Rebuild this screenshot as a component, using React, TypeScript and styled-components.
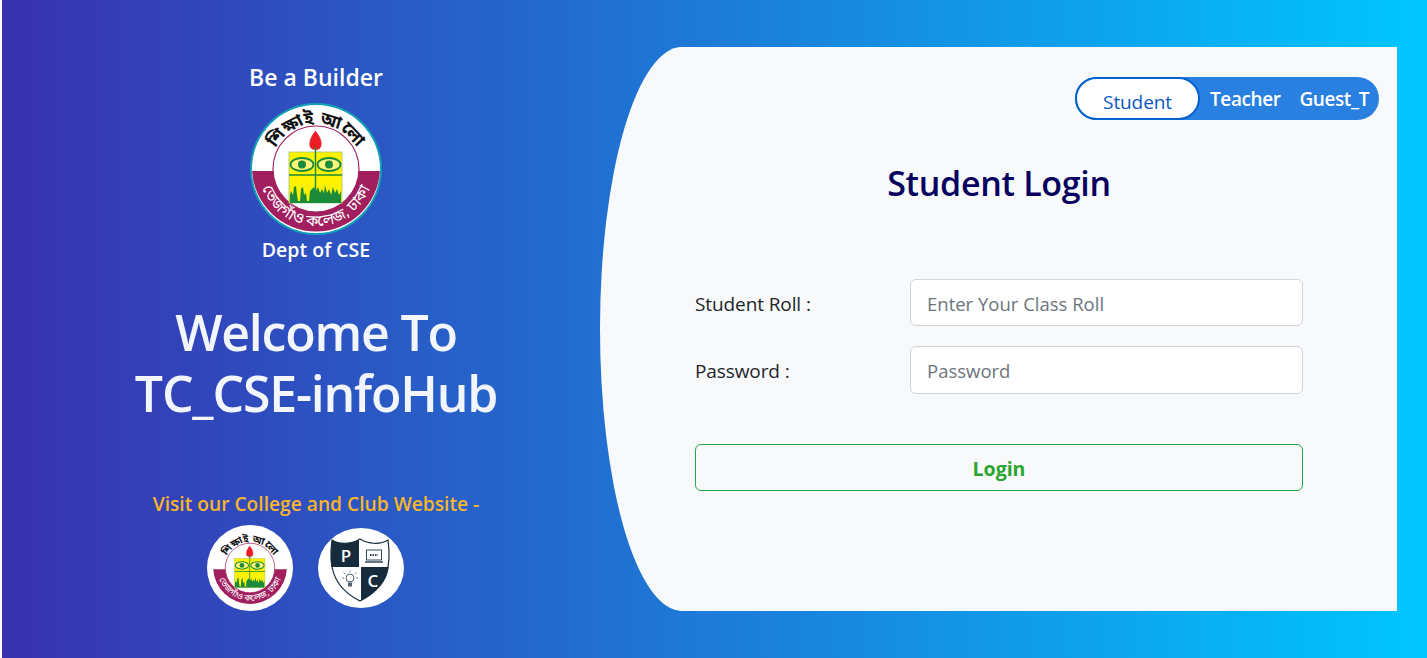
import React from 'react';
import styled, { createGlobalStyle } from 'styled-components';

const GlobalStyle = createGlobalStyle`
  html, body {
    margin: 0;
    padding: 0;
    background: #fff;
    font-family: "Open Sans", "Noto Sans", "Liberation Sans", sans-serif;
  }
`;

const Page = styled.div`
  display: flex;
  width: 1425px;
  height: 658px;
  margin-left: 2px;
  background: linear-gradient(90deg, #3931af 0%, #00c6ff 100%);
  box-sizing: border-box;
  padding: 47px 30px 47px 0;
`;

const Intro = styled.section`
  width: 598px;
  padding-left: 30px;
  margin-top: -47px;
  box-sizing: border-box;
  display: flex;
  flex-direction: column;
  align-items: center;
  color: #fff;
`;

const Motto = styled.div`
  margin-top: 62px;
  margin-bottom: 11px;
  height: 30px;
  font-size: 23px;
  line-height: 30px;
  font-weight: 600;
`;

const Dept = styled.div`
  font-size: 19.5px;
  line-height: 26px;
  font-weight: 600;
  margin-top: 2px;
`;

const Welcome = styled.h1`
  margin: 39px 0 0;
  font-size: 50px;
  line-height: 61px;
  font-weight: 600;
  text-align: center;
  letter-spacing: -1.2px;
  color: #f4f6ff;
`;

const Visit = styled.div`
  margin-top: 67px;
  font-size: 19.2px;
  line-height: 26px;
  font-weight: 600;
  color: #f9b52b;
`;

const LinkRow = styled.div`
  display: flex;
  gap: 25px;
  margin-top: 8px;
  margin-right: 21px;
  align-items: center;
`;

const Badge = styled.a<{ $height: number }>`
  width: 86px;
  height: ${(p) => p.$height}px;
  border-radius: 50%;
  background: #fff;
  display: flex;
  align-items: center;
  justify-content: center;
  overflow: hidden;
`;

const Panel = styled.main`
  flex: 1;
  background: #f8f9fa;
  border-radius: 82px 0 0 82px / 50% 0 0 50%;
  display: flex;
  flex-direction: column;
  padding: 30px 18px 0 95px;
  box-sizing: border-box;
`;

const Tabs = styled.div`
  align-self: flex-end;
  display: flex;
  align-items: center;
  width: 304px;
  height: 43px;
  border-radius: 22px;
  background: #2a80e0;
`;

const Tab = styled.button<{ $active?: boolean }>`
  border: ${(p) => (p.$active ? '2px solid #0062cc' : 'none')};
  background: ${(p) => (p.$active ? '#fff' : 'transparent')};
  color: ${(p) => (p.$active ? '#0b57c4' : '#fff')};
  border-radius: 22px;
  height: 43px;
  width: ${(p) => (p.$active ? '125px' : 'auto')};
  box-sizing: border-box;
  padding: ${(p) => (p.$active ? '7px 0 0' : '0')};
  font-family: "Open Sans", sans-serif;
  font-size: 19px;
  font-weight: ${(p) => (p.$active ? 500 : 600)};
  letter-spacing: ${(p) => (p.$active ? '-0.1px' : '-0.4px')};
`;

const TabGap = styled.div`
  display: flex;
  flex: 1;
  justify-content: space-between;
  padding: 0 10px 0 10px;
`;

const Title = styled.h2`
  margin: 41px 0 0;
  width: 608px;
  font-size: 34px;
  line-height: 45px;
  font-weight: 600;
  text-align: center;
  color: #07005f;
  letter-spacing: -0.3px;
`;

const LoginForm = styled.form`
  margin-top: 72.75px;
  width: 608px;
  display: flex;
  flex-direction: column;
`;

const Row = styled.div`
  display: flex;
  align-items: center;
  height: 47.5px;
  margin-bottom: 20px;
`;

const Label = styled.label`
  width: 215px;
  padding-top: 2px;
  font-size: 19px;
  color: #212529;
  letter-spacing: -0.1px;
`;

const Input = styled.input`
  width: 393px;
  height: 47.5px;
  box-sizing: border-box;
  border: 1px solid #ced4da;
  border-radius: 6px;
  background: #fff;
  padding: 1px 16px 0;
  font: 400 18.5px "Open Sans", sans-serif;
  &::placeholder {
    color: #6c757d;
    opacity: 1;
  }
`;

const LoginButton = styled.button`
  margin-top: 30px;
  width: 608px;
  height: 47px;
  padding-top: 3px;
  background: transparent;
  border: 1px solid #28a745;
  border-radius: 6px;
  color: #2aa52e;
  font: 700 19.5px "Open Sans", sans-serif;
`;

// college crest, the same drawing is used at both sizes
function CollegeCrest({ size, ring, id }: { size: number; ring?: boolean; id: string }) {
  return (
    <svg width={size} height={size} viewBox="0 0 132 132" aria-label="College crest">
      <defs>
        <path id={`${id}-top`} d="M 21 66 A 45 45 0 0 1 111 66" />
        <path id={`${id}-bottom`} d="M 9 66 A 57 57 0 0 0 123 66" />
      </defs>
      <circle cx="66" cy="66" r="66" fill={ring ? '#12a0b4' : '#fff'} />
      <circle cx="66" cy="66" r="64" fill="#fff" />
      <path d="M 2.1 68 H 129.9 A 64 64 0 0 1 2.1 68 Z" fill="#a11f5f" />
      <circle cx="66" cy="66" r="43" fill="#fff" stroke="#a11f5f" strokeWidth="1.2" />
      <path d="M 60 43 C 59 37 62 33 65.5 28 C 69 33 72 37 71 43 C 70 48 61 48 60 43 Z" fill="#ee1c25" stroke="#ee1c25" strokeDasharray="1.5 1" />
      <rect x="39" y="49" width="53" height="51" fill="#fff200" stroke="#9fc47a" strokeWidth="0.8" />
      <path d="M 65.5 44 V 100 M 39 72 H 92" stroke="#1b8a3a" strokeWidth="1.4" />
      <ellipse cx="52" cy="61.5" rx="11.5" ry="6.5" fill="#fff67a" stroke="#1b8a3a" strokeWidth="1.8" />
      <ellipse cx="79" cy="61.5" rx="11.5" ry="6.5" fill="#fff67a" stroke="#1b8a3a" strokeWidth="1.8" />
      <circle cx="52" cy="61.5" r="4" fill="#1b8a3a" />
      <circle cx="79" cy="61.5" r="4" fill="#1b8a3a" />
      <path d="M 40 100 V 92 L 41 88 L 43 92 L 44 84 L 46 83 L 47 92 L 48 98 L 50 98 L 51 86 L 53 84 L 54 92 L 56 90 L 57 98 L 59 98 L 60 88 L 62 86 L 64 84 L 66 88 L 68 84 L 70 90 L 72 86 L 74 90 L 75 82 L 77 90 L 79 86 L 81 92 L 83 84 L 85 90 L 87 86 L 89 92 L 91 88 V 100 Z" fill="#1b8a3a" />
      <text fontFamily="'Noto Sans Bengali', 'Noto Sans', sans-serif" fontSize="17.5" fontWeight="700" fill="#111">
        <textPath href={`#${id}-top`} startOffset="50%" textAnchor="middle">শিক্ষাই আলো</textPath>
      </text>
      <text fontFamily="'Noto Sans Bengali', 'Noto Sans', sans-serif" fontSize="15.5" fill="#fff">
        <textPath href={`#${id}-bottom`} startOffset="50%" textAnchor="middle">তেজগাঁও কলেজ, ঢাকা</textPath>
      </text>
    </svg>
  );
}

function ClubShield() {
  return (
    <svg width="86" height="80" viewBox="0 0 86 80" aria-label="Programming club shield">
      <path d="M 14 12 C 22 17 34 16 42 11 C 50 16 62 17 70 12 C 73 34 72 58 42 73 C 12 58 11 34 14 12 Z" fill="#fff" stroke="#162c3c" strokeWidth="1.2" />
      <path d="M 14 12 C 22 17 34 16 41 11.5 V 39 H 13.2 C 12.6 30 13 21 14 12 Z" fill="#162c3c" />
      <path d="M 43 39 H 70.8 C 69 53 60 64 43 72.5 Z" fill="#162c3c" />
      <text x="28" y="34" fontFamily="'Open Sans', sans-serif" fontSize="17" fontWeight="600" fill="#fff" textAnchor="middle">P</text>
      <text x="55" y="59" fontFamily="'Open Sans', sans-serif" fontSize="17" fontWeight="600" fill="#fff" textAnchor="middle">C</text>
      <rect x="48.5" y="22" width="15" height="10" fill="none" stroke="#33485a" strokeWidth="1" />
      <path d="M 47 34 H 65" stroke="#33485a" strokeWidth="1.4" />
      <path d="M 52 27 H 60" stroke="#33485a" strokeWidth="2" strokeDasharray="1.5 1" />
      <circle cx="32" cy="50" r="4" fill="none" stroke="#516370" strokeWidth="1" />
      <path d="M 30 54.5 H 34 V 58.5 H 30 Z" fill="#516370" />
      <path d="M 32 42.5 V 44.5 M 25.5 44.5 L 27 46 M 38.5 44.5 L 37 46 M 24 50 H 26 M 38 50 H 40" stroke="#516370" strokeWidth="0.8" />
    </svg>
  );
}

export default function App() {
  return (
    <>
      <GlobalStyle />
      <Page>
        <Intro>
          <Motto>Be a Builder</Motto>
          <CollegeCrest id="crest-large" size={132} ring />
          <Dept>Dept of CSE</Dept>
          <Welcome>
            Welcome To
            <br />
            TC_CSE-infoHub
          </Welcome>
          <Visit>Visit our College and Club Website -</Visit>
          <LinkRow>
            <Badge $height={86}>
              <CollegeCrest id="crest-small" size={76} />
            </Badge>
            <Badge $height={80}>
              <ClubShield />
            </Badge>
          </LinkRow>
        </Intro>
        <Panel>
          <Tabs>
            <Tab $active>Student</Tab>
            <TabGap>
              <Tab>Teacher</Tab>
              <Tab>Guest_T</Tab>
            </TabGap>
          </Tabs>
          <Title>Student Login</Title>
          <LoginForm>
            <Row>
              <Label>Student Roll :</Label>
              <Input placeholder="Enter Your Class Roll" />
            </Row>
            <Row>
              <Label>Password :</Label>
              <Input type="password" placeholder="Password" />
            </Row>
            <LoginButton type="button">Login</LoginButton>
          </LoginForm>
        </Panel>
      </Page>
    </>
  );
}
